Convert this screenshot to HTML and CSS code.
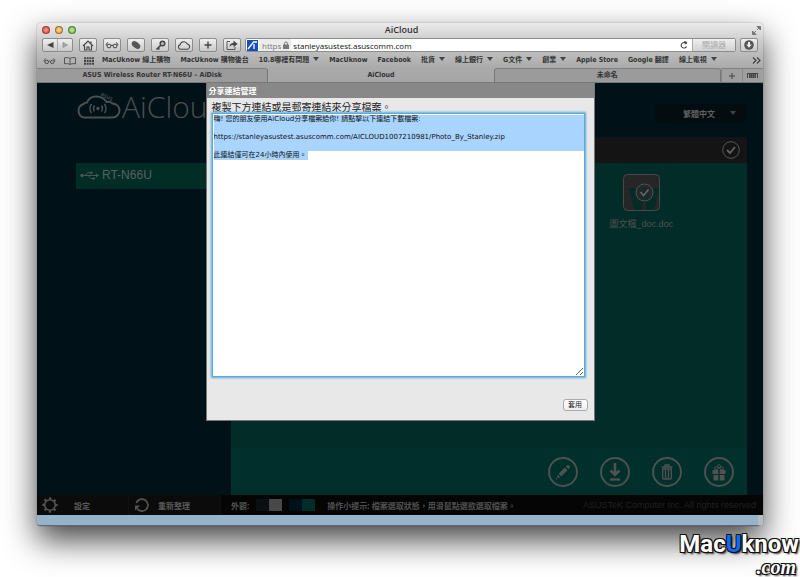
FILE: index.html
```
<!DOCTYPE html>
<html lang="zh-Hant">

<head>
    <meta charset="UTF-8">
    <meta name="viewport" content="width=device-width, initial-scale=1.0">
    <title>AiCloud</title>
    <link rel="stylesheet" href="styles.css">
</head>

<body>
    <div class="window">
        <!-- browser chrome -->
        <header class="chrome">
            <div class="titlebar">
                <div class="lights">
                    <span class="light red"></span>
                    <span class="light yellow"></span>
                    <span class="light green"></span>
                </div>
                <span class="window-title">AiCloud</span>
                <svg class="fullscreen" width="9" height="9" viewBox="0 0 9 9"><path d="M5 .5h3.5V4zM.5 5v3.5H4zM7.5 1.500 5 4M1.500 7.500 4 5" fill="#777" stroke="#777"/></svg>
            </div>

            <div class="toolbar">
                <div class="tool-group">
                    <div class="nav-buttons">
                        <button class="nav-button" aria-label="Back"><svg width="7" height="6" viewBox="0 0 7 6"><path d="M6.500 0v6L0 3z" fill="#444"/></svg></button>
                        <button class="nav-button" aria-label="Forward"><svg width="7" height="6" viewBox="0 0 7 6"><path d="M1 .5v5L5.500 3z" fill="#aaa" stroke="#888" stroke-width=".7"/></svg></button>
                    </div>
                    <button class="tool" aria-label="Home"><svg width="12" height="11" viewBox="0 0 12 11"><path d="M1 6 6 1l5 5M2.500 5.500V10h2.500V7h2v3h2.500V5.500M9 1.500v2" fill="none" stroke="#444" stroke-width="1.100"/></svg></button>
                    <button class="tool" aria-label="Reading list"><svg width="14" height="8" viewBox="0 0 14 8"><use href="#glasses"/></svg></button>
                    <button class="tool" aria-label="Clip"><svg width="10" height="10" viewBox="0 0 10 10"><ellipse cx="5" cy="5" rx="4.800" ry="3" transform="rotate(38 5 5)" fill="#555"/></svg></button>
                    <button class="tool" aria-label="Passwords"><svg width="11" height="11" viewBox="0 0 11 11"><circle cx="7.500" cy="3.500" r="2.300" fill="#bbb" stroke="#444" stroke-width="1.500"/><path d="M6 5 1.500 9.500M3 8l1.500 1.500" stroke="#444" stroke-width="1.600"/></svg></button>
                    <button class="tool" aria-label="iCloud tabs"><svg width="14" height="9" viewBox="0 0 14 9"><path d="M3.500 8.300a2.400 2.400 0 0 1-.3-4.700 3.700 3.700 0 0 1 7-.7 2.800 2.800 0 0 1 .6 5.400z" fill="none" stroke="#444" stroke-width="1.100"/></svg></button>
                    <button class="tool" aria-label="Add bookmark"><svg width="8" height="8" viewBox="0 0 8 8"><path d="M4 .5v7M.5 4h7" stroke="#444" stroke-width="1.400"/></svg></button>
                    <button class="tool" aria-label="Share"><svg width="12" height="10" viewBox="0 0 12 10"><path d="M4 1.500H1v8h8V7" fill="none" stroke="#555"/><path d="M3.500 7c0-3 1.500-4 4-4V.5L11.500 4l-4 3.200V5C5.500 5 4.500 5.500 3.500 7z" fill="#444"/></svg></button>
                </div>

                <form class="address">
                    <svg class="site-icon" width="11" height="11" viewBox="0 0 11 11"><path d="M0 0h11v11H0z" fill="#1550b8"/><path d="M1 9 6.500 2H10M7 4v5" fill="none" stroke="#fff" stroke-width="1.300"/></svg>
                    <span class="secure">https
                        <svg width="6" height="8" viewBox="0 0 6 8"><path d="M1.500 4V2.500a1.500 1.500 0 0 1 3 0V4" fill="none" stroke="#777"/><path d="M0 3.500h6V8H0z" fill="#777"/></svg>
                    </span>
                    <input class="url" type="text" aria-label="Address" value="stanleyasustest.asuscomm.com">
                    <button class="reload" type="button" aria-label="Reload"><svg width="8" height="8" viewBox="0 0 8 8"><path d="M6.500 3A2.800 2.800 0 1 0 6.500 5.500" fill="none" stroke="#444" stroke-width="1.100"/><path d="M4 0l3.500 1L5 3.500z" fill="#444"/></svg></button>
                    <button class="reader" type="button" disabled>閱讀器</button>
                </form>
                <button class="tool" aria-label="Downloads"><svg width="10" height="10" viewBox="0 0 10 10"><circle cx="5" cy="5" r="4.800" fill="#555"/><path d="M4 2h2v2.500h1.800L5 7.800 2.200 4.500H4z" fill="#eee"/></svg></button>
            </div>

            <nav class="bookmarks">
                <a class="mark-icon" href="#" aria-label="Reading list"><svg width="13" height="8" viewBox="0 0 14 8">
                    <g id="glasses" fill="none" stroke="#444"><circle cx="4" cy="5" r="1.900"/><circle cx="10" cy="5" r="1.900"/><path d="M6 4.500q1-.8 2 0M2 4.500.8 3.500 3 1.500M12 4.500l1.200-1-2.200-2"/></g>
                </svg></a>
                <a class="mark-icon" href="#" aria-label="Bookmarks"><svg width="12" height="8" viewBox="0 0 12 8"><path d="M6 1.500C4.500.4 2.500.5.500.8v6c2-.3 4-.3 5.500.7 1.500-1 3.500-1 5.500-.7v-6C9.500.5 7.500.4 6 1.500zv6" fill="none" stroke="#555"/></svg></a>
                <a class="mark-icon" href="#" aria-label="Top sites"><svg width="10" height="8" viewBox="0 0 10 8"><path d="M0 1.200h10M0 4h10M0 6.800h10" stroke="#444" stroke-width="2" stroke-dasharray="2 .67"/></svg></a>
                <a href="#">MacUknow 線上購物</a>
                <a href="#">MacUknow 購物後台</a>
                <a class="folder" href="#">10.8哪裡有問題</a>
                <a href="#">MacUknow</a>
                <a href="#">Facebook</a>
                <a class="folder" href="#">批貨</a>
                <a class="folder" href="#">線上銀行</a>
                <a class="folder" href="#">G文件</a>
                <a class="folder" href="#">創業</a>
                <a href="#">Apple Store</a>
                <a href="#">Google 翻譯</a>
                <a class="folder" href="#">線上電視</a>
                <button class="more" aria-label="More bookmarks"><svg width="9" height="7" viewBox="0 0 9 7"><path d="M1 .5l3 3-3 3M5 .5l3 3-3 3" fill="none" stroke="#444" stroke-width="1.200"/></svg></button>
            </nav>

            <div class="tabs">
                <button class="tab">ASUS Wireless Router RT-N66U – AiDisk</button>
                <button class="tab active">AiCloud</button>
                <button class="tab">未命名</button>
                <button class="tab-tool" aria-label="New tab"><svg width="6" height="6" viewBox="0 0 6 6"><path d="M3 0v6M0 3h6" stroke="#444"/></svg></button>
                <button class="tab-tool" aria-label="All tabs"><svg width="11" height="6" viewBox="0 0 11 6"><path d="M0 .5h11M.5 0v5M10.500 0v5" stroke="#444"/><path d="M2 3h7" stroke="#444" stroke-width="4" stroke-dasharray="1.500 .3"/></svg></button>
            </div>
        </header>

        <!-- AiCloud page -->
        <main class="page">
            <div class="page-header">
                <div class="brand">
                    <svg width="46" height="27" viewBox="0 0 46 27">
                        <path d="M8 25.500a7 7 0 0 1-.5-13.500c1-1.200 2-1.500 3.500-1.500C12.500 6.500 16 4.500 20 4.500c5 0 8.500 2 10.500 5.500 2-.5 4-.3 6 1.500 4.500.5 7 3.500 7 7s-3 7-7 7z" fill="none" stroke="#4a4f50" stroke-width="2"/>
                        <circle cx="22" cy="16.500" r="1.700" fill="#4a4f50"/>
                        <path d="M18.500 13.500q-2 3 0 6M15.500 12q-3 4.500 0 9M25.500 13.500q2 3 0 6M28.500 12q3 4.500 0 9" fill="none" stroke="#4a4f50" stroke-width="1.500"/>
                        <text class="brand-small" x="24" y="3" transform="rotate(28 24 3)">asus</text>
                    </svg>
                    <span class="brand-name">AiCloud</span>
                </div>
                <div class="language">
                    <select class="language-select" aria-label="Language">
                        <option>繁體中文</option>
                    </select>
                    <svg class="language-arrow" width="6" height="4" viewBox="0 0 6 4"><path d="M0 0h6L3 4z" fill="#444"/></svg>
                </div>
            </div>

            <div class="page-body">
                <aside class="devices">
                    <a class="device" href="#">
                        <svg width="19" height="9" viewBox="0 0 19 9"><circle cx="2" cy="4.500" r="1.700" fill="#4f5453"/><path d="M2 4.500h15M5 4.500l3-2.800h3M8 4.500l3 3h3" fill="none" stroke="#4f5453"/><path d="M16 2.500l3 2-3 2zM13 6.500h2v2h-2z" fill="#4f5453"/><circle cx="11.500" cy="1.700" r="1.200" fill="#4f5453"/></svg>
                        RT-N66U
                    </a>
                </aside>

                <section class="files">
                    <div class="files-header">
                        <button class="check-all" aria-label="Select all"><svg width="18" height="18" viewBox="0 0 18 18"><circle cx="9" cy="9" r="8.300" fill="none" stroke="#555"/><path d="M5 9l3 3 5-6" fill="none" stroke="#666" stroke-width="1.800"/></svg></button>
                    </div>
                    <div class="files-list">
                        <a class="file" href="#">
                            <svg width="37" height="37" viewBox="0 0 37 37">
                                <rect x=".5" y=".5" width="36" height="36" rx="4" fill="#262626" stroke="#484848"/>
                                <path d="M6 14h6l3 15 4-15h5l3 15 4-15h5l-5 22h-7l-3-13-3 13h-7z" fill="#012c27"/>
                                <circle cx="21.500" cy="18.500" r="8.500" fill="#262c2b" fill-opacity=".6" stroke="#555"/>
                                <path d="M17.500 18l3 3.500 5-6" fill="none" stroke="#666" stroke-width="1.600"/>
                            </svg>
                            <span>圖文檔_doc.doc</span>
                        </a>
                    </div>
                    <div class="files-actions">
                        <button class="action" aria-label="Rename"><svg width="16" height="16" viewBox="0 0 16 16"><path d="M3.500 9.800 9.800 3.500l2.700 2.700-6.300 6.300zM10.700 2.600l1.200-1.200q1-.8 2 .1l.6.6q.9 1 .1 2l-1.200 1.200zM2.800 10.800l2.400 2.400-2.200.8-1-1zM1 14h1.200v1.200H1z" fill="#505252"/></svg></button>
                        <button class="action" aria-label="Download"><svg width="14" height="18" viewBox="0 0 14 18"><path d="M7 0v11M2.500 7.500 7 12l4.500-4.500" fill="none" stroke="#505252" stroke-width="2.600"/><path d="M2 16.500h10" stroke="#505252" stroke-width="2.200"/></svg></button>
                        <button class="action" aria-label="Delete"><svg width="12" height="16" viewBox="0 0 12 16"><path d="M.5 3h11M4 2.500v-1.500h4v1.500" fill="none" stroke="#505252" stroke-width="1.300"/><path d="M1.700 5h8.600v9q0 1-1 1H2.700q-1 0-1-1zM4.500 6v8M7.500 6v8" fill="none" stroke="#505252" stroke-width="1.300"/></svg></button>
                        <button class="action" aria-label="Share"><svg width="14" height="17" viewBox="0 0 14 17"><path d="M.5 6h5.800v4H.5zM7.700 6h5.800v4H7.700zM1.500 11h4.800v5.500H1.500zM7.700 11h4.800v5.500H7.700z" fill="#505252"/><circle cx="7" cy="2.300" r="1.500" fill="none" stroke="#505252"/><ellipse cx="4.300" cy="4.200" rx="1.900" ry="1.400" fill="none" stroke="#505252"/><ellipse cx="9.700" cy="4.200" rx="1.900" ry="1.400" fill="none" stroke="#505252"/></svg></button>
                    </div>
                </section>
            </div>

            <footer class="footer">
                <button class="footer-button">
                    <svg width="16" height="16" viewBox="0 0 16 16"><circle cx="8" cy="8" r="5.300" fill="none" stroke="#555" stroke-width="1.600"/><circle cx="8" cy="8" r="6.700" fill="none" stroke="#555" stroke-width="2" stroke-dasharray="2.200 3.062" stroke-dashoffset="1.100"/></svg>
                    設定
                </button>
                <button class="footer-button refresh">
                    <svg width="16" height="16" viewBox="0 0 16 16"><path d="M3 11.500A6 6 0 1 0 2.300 6" fill="none" stroke="#555" stroke-width="1.700"/><path d="M1 13.500v-5h5z" fill="#555"/></svg>
                    重新整理
                </button>
                <div class="footer-info">
                    <span>外觀:</span>
                    <button class="swatch gray" aria-label="Gray theme"></button>
                    <button class="swatch teal" aria-label="Teal theme"></button>
                    <span class="tip">操作小提示: 檔案選取狀態，用滑鼠點選欲選取檔案。</span>
                    <span class="copyright">ASUSTeK Computer Inc. All rights reserved</span>
                </div>
            </footer>

            <!-- share link dialog -->
            <form class="dialog" role="dialog" aria-labelledby="dialog-title">
                <h1 class="dialog-title" id="dialog-title">分享連結管理</h1>
                <div class="dialog-body">
                    <label class="dialog-label" for="share-text">複製下方連結或是郵寄連結來分享檔案。</label>
                    <textarea class="share-text" id="share-text" spellcheck="false">嗨! 您的朋友使用AiCloud分享檔案給你! 請點擊以下連結下載檔案:

https://stanleyasustest.asuscomm.com/AICLOUD1007210981/Photo_By_Stanley.zip

此連結僅可在24小時內使用。</textarea>
                    <button class="apply" type="button">套用</button>
                </div>
            </form>
        </main>
        <div class="scrollbar"></div>
    </div>

    <div class="watermark">
        <div class="watermark-name">Mac<span>U</span>know</div>
        <div class="watermark-com">.com</div>
    </div>
</body>

</html>
```
FILE: styles.css
```
* {
    box-sizing: border-box;
}

body {
    margin: 0;
    padding: 23px 37px 0;
    background: white;
    font-family: "Open Sans", "Noto Sans CJK TC", sans-serif;
    font-size: 8px;
    overflow: hidden;
}

button, input, select, textarea {
    margin: 0;
    padding: 0;
    border: none;
    background: none;
    font: inherit;
    color: inherit;
}

a {
    color: inherit;
    text-decoration: none;
}

svg {
    display: block;
    flex: none;
    overflow: visible;
}

.window {
    border-radius: 4px;
    box-shadow: 0 14px 32px rgba(0, 0, 0, 0.74), 0 0 1px #444;
}

/* browser chrome */
.chrome {
    border-radius: 4px 4px 0 0;
    background: linear-gradient(#ebebeb, #cccccc 18px, #aaaaaa 45px, #a6a6a6);
    color: #333;
    overflow: hidden;
}

.titlebar {
    display: grid;
    grid-template-columns: 1fr auto 1fr;
    align-items: center;
    height: 14px;
    padding: 0 2px 0 5px;
}

.lights {
    display: flex;
    gap: 5px;
}

.light {
    width: 8px;
    height: 8px;
    border-radius: 50%;
    border: 1px solid rgba(0, 0, 0, 0.35);
}

.red {
    background: radial-gradient(#ff9c90, #dd3c37);
}

.yellow {
    background: radial-gradient(#ffe08c, #dd9433);
}

.green {
    background: radial-gradient(#c5ee9c, #68ac42);
}

.window-title {
    font-size: 9px;
    line-height: 14px;
    font-weight: 600;
}

.fullscreen {
    justify-self: end;
}

.toolbar {
    display: flex;
    align-items: center;
    gap: 4px;
    height: 16px;
    padding: 0 5px;
}

.tool-group {
    display: flex;
    gap: 6px;
}

.nav-buttons {
    display: flex;
    width: 31px;
    height: 14px;
    border: 1px solid #8c8c8c;
    border-radius: 2px;
    background: linear-gradient(#efefef, #c9c9c9);
}

.nav-button {
    display: flex;
    flex: 1;
    align-items: center;
    justify-content: center;
}

.nav-button + .nav-button {
    border-left: 1px solid #aaa;
}

.tool {
    display: flex;
    align-items: center;
    justify-content: center;
    width: 18px;
    height: 14px;
    border: 1px solid #8c8c8c;
    border-radius: 2px;
    background: linear-gradient(#efefef, #c9c9c9);
}

.address {
    display: flex;
    flex: 1;
    align-items: center;
    height: 14px;
    border: 1px solid #8c8c8c;
    border-radius: 2px;
    background: white;
    padding-left: 1px;
}

.secure {
    display: flex;
    align-items: center;
    gap: 2px;
    height: 12px;
    margin: 0 2px 0 1px;
    padding: 0 2px 0 3px;
    background: #ececec;
    color: #777;
    font-size: 8px;
}

.url {
    flex: 1;
    min-width: 0;
    height: 12px;
    color: #111;
}

.reload {
    margin-right: 4px;
}

.reader {
    width: 43px;
    height: 12px;
    border-left: 1px solid #aaa;
    background: linear-gradient(#efefef, #d2d2d2);
    color: #aaa;
    line-height: 10px;
}

.bookmarks {
    display: flex;
    align-items: center;
    gap: 10px;
    height: 15px;
    padding: 0 2px 0 6px;
    font-family: "DejaVu Sans Condensed", "Noto Sans CJK TC", sans-serif;
    font-size: 7px;
    font-weight: bold;
    line-height: 15px;
    white-space: nowrap;
}

.mark-icon {
    margin-right: -2px;
}

.folder::after {
    content: "";
    display: inline-block;
    margin-left: 4px;
    border: 3px solid transparent;
    border-top: 4px solid #444;
    border-bottom: none;
    vertical-align: 1px;
}

.more {
    margin-left: auto;
}

.tabs {
    display: flex;
    height: 15px;
    border-bottom: 1px solid #777;
}

.tab {
    flex: 1;
    min-width: 0;
    border-top: 1px solid #808080;
    border-right: 1px solid #777;
    border-radius: 0 3px 0 0;
    background: #9b9b9b;
    font-family: "DejaVu Sans Condensed", "Noto Sans CJK TC", sans-serif;
    font-size: 7px;
    font-weight: bold;
    line-height: 13px;
}

.tab:first-child {
    flex-basis: 6px;
}

.tab.active {
    border: none;
    background: none;
}

.tab.active + .tab {
    border-left: 1px solid #777;
    border-radius: 3px 3px 0 0;
}

.tab-tool {
    display: flex;
    align-items: center;
    justify-content: center;
    width: 21px;
    border-top: 1px solid #808080;
    border-left: 1px solid #888;
    background: #9f9f9f;
}

/* AiCloud page */
.page {
    position: relative;
    background: #001217;
    color: #505050;
}

.page-header {
    display: flex;
    justify-content: space-between;
    align-items: flex-start;
    height: 54px;
    padding: 9px 17px 0 39px;
}

.brand {
    display: flex;
    color: #4a4f50;
}

.brand-name {
    font-size: 30px;
    font-weight: 300;
    line-height: 30px;
}

.brand-small {
    fill: #4a4f50;
    font-size: 6px;
    font-weight: 600;
}

.language {
    display: flex;
    align-items: center;
    position: relative;
    width: 91px;
    height: 18px;
    margin-top: 12px;
    background: #050c0f;
}

.language-select {
    appearance: none;
    width: 100%;
    height: 18px;
    padding: 0 28px;
    font-weight: bold;
    color: #606060;
}

.language-arrow {
    position: absolute;
    right: 10px;
    pointer-events: none;
}

.page-body {
    display: flex;
    padding-right: 16px;
}

.devices {
    width: 194px;
    padding: 26px 0 0 39px;
}

.device {
    display: flex;
    align-items: center;
    gap: 3px;
    height: 26px;
    padding: 0 0 2px 4px;
    background: #012d27;
    color: #5b605f;
    font-family: "Liberation Sans", sans-serif;
    font-size: 12px;
}

.files {
    flex: 1;
    background: #012c27;
}

.files-header {
    display: flex;
    align-items: center;
    justify-content: flex-end;
    height: 26px;
    padding-right: 7px;
    background: #141414;
}

.files-list {
    display: grid;
    grid-template-columns: repeat(4, 1fr);
    align-items: start;
    min-height: 284px;
    padding: 11px 55px;
}

.file {
    grid-column: 4;
    display: flex;
    flex-direction: column;
    align-items: center;
    gap: 6px;
    font-family: "Liberation Sans", "Noto Sans CJK TC", sans-serif;
    font-size: 9px;
    line-height: 14px;
}

.files-actions {
    display: flex;
    justify-content: flex-end;
    gap: 22px;
    padding: 10px 13px 8px;
    background: #01302c;
}

.action {
    display: flex;
    align-items: center;
    justify-content: center;
    width: 30px;
    height: 30px;
    border: 2px solid #4b5050;
    border-radius: 50%;
}

.footer {
    display: flex;
    height: 20px;
    background: #050505;
    font-weight: bold;
}

.footer-button {
    display: flex;
    align-items: center;
    gap: 16px;
    width: 92px;
    padding-left: 5px;
    border-right: 1px solid #111;
    background: #0b0b0b;
    color: #5a5a5a;
}

.refresh {
    gap: 8px;
}

.footer-info {
    display: flex;
    flex: 1;
    align-items: center;
    gap: 7px;
    padding: 0 7px 0 10px;
    white-space: nowrap;
}

.swatch {
    width: 26px;
    height: 12px;
}

.gray {
    background: linear-gradient(to right, #0c0f12 50%, #484848 50%);
}

.teal {
    background: linear-gradient(to right, #001217 50%, #012c27 50%);
}

.tip {
    margin-left: 5px;
}

.copyright {
    margin-left: auto;
    color: #1e2222;
    font-family: "Liberation Sans", sans-serif;
    font-size: 9px;
    font-weight: normal;
}

.scrollbar {
    height: 11px;
    border-bottom: 1px solid #667;
    border-right: 5px solid #b5bcc2;
    border-radius: 0 0 3px 3px;
    background: #95b3c9;
}

/* share dialog */
.dialog {
    position: absolute;
    top: 0;
    left: 0;
    right: 0;
    width: 389px;
    margin: 0 auto;
    border: 1px solid #777;
    border-top: none;
    background: #e8e8e8;
    color: #222;
}

.dialog-title {
    margin: 0;
    padding: 1px 0 0 2px;
    background: #888;
    color: white;
    font-size: 8px;
    line-height: 14px;
}

.dialog-body {
    display: flex;
    flex-direction: column;
    padding: 3px 5px 9px;
}

.dialog-label {
    font-size: 10px;
    line-height: 12px;
}

.share-text {
    height: 264px;
    margin-right: 4px;
    padding: 1px;
    border: 1px solid #5aabda;
    outline: none;
    box-shadow: 0 0 2px 1px #5aabda;
    background:
        linear-gradient(#a8d4fe, #a8d4fe) 1px 1px / 100% 36px no-repeat,
        linear-gradient(#a8d4fe, #a8d4fe) 1px 37px / 94px 9px no-repeat,
        white;
    color: #111;
    font-family: "DejaVu Sans", "Noto Sans CJK TC", sans-serif;
    font-size: 7px;
    line-height: 9px;
    resize: both;
}

.apply {
    align-self: flex-end;
    width: 25px;
    height: 12px;
    margin: 22px 1px 0 0;
    border: 1px solid #aaa;
    border-radius: 3px;
    background: linear-gradient(#fff, #eee);
    font-size: 7px;
    line-height: 10px;
}

/* watermark */
.watermark {
    position: relative;
    margin: 5px -37px 0 0;
    padding-right: 1px;
    text-align: right;
    color: white;
    text-shadow: -1px -1px #111, 1px -1px #111, -1px 1px #111, 1px 1px #111, 2px 2px 2px #333;
}

.watermark-name {
    font-family: Roboto, sans-serif;
    font-size: 24px;
    font-weight: bold;
    line-height: 26px;
}

.watermark-name span {
    color: #0a6cff;
}

.watermark-com {
    padding-right: 3px;
    font-family: "Liberation Serif", serif;
    font-size: 20px;
    font-style: italic;
    font-weight: bold;
    line-height: 20px;
}
```
